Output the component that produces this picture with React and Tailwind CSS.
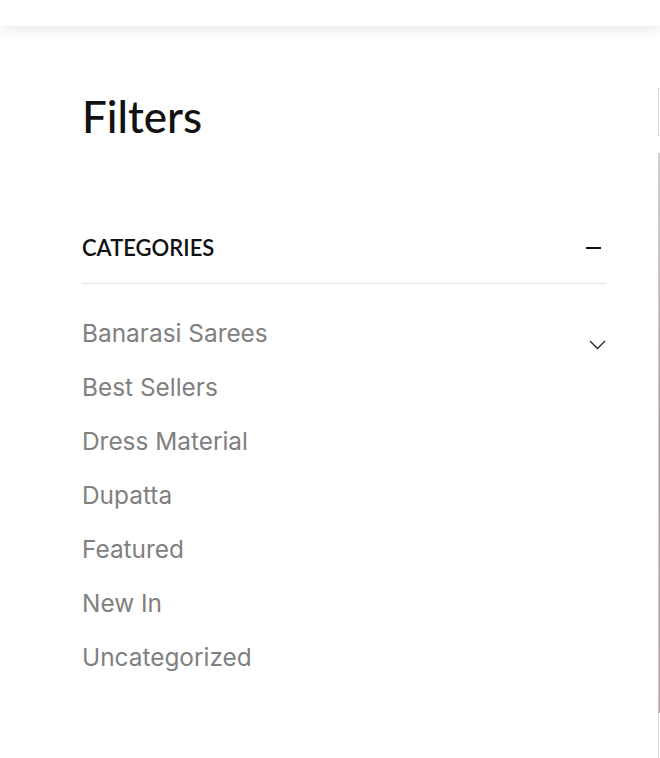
import React, { useState } from 'react';

const categories = [
  'Banarasi Sarees',
  'Best Sellers',
  'Dress Material',
  'Dupatta',
  'Featured',
  'New In',
  'Uncategorized',
];

export default function App() {
  const [open, setOpen] = useState(true);

  return (
    <div className="relative h-[758px] w-[660px] overflow-hidden bg-white">
      {/* top header strip */}
      <div className="relative z-10 h-[26px] w-full bg-white shadow-[0_4px_14px_rgba(0,0,0,0.09)]" />

      <div className="flex">
        {/* filters panel */}
        <div className="w-[658px] shrink-0 pl-[82px] pr-[52px]">
          <h2
            className="mt-[62px] text-[44px] font-medium leading-[56px] text-[#111]"
            style={{ fontFamily: 'Lato, sans-serif' }}
          >
            Filters
          </h2>

          <div className="mt-[89px]">
            <button
              onClick={() => setOpen(!open)}
              className="flex w-full items-center justify-between border-b border-[#e4e4e4] pb-[20px]"
            >
              <span
                className="text-[22px] font-semibold leading-[30px] text-[#111]"
                style={{ fontFamily: 'Lato, sans-serif' }}
              >
                CATEGORIES
              </span>
              <span className="mr-[5px] block h-[1.5px] w-[15px] bg-[#111]" />
            </button>

            {open && (
              <ul className="pt-[22px]" style={{ fontFamily: 'Inter, sans-serif' }}>
                {categories.map((c, i) => (
                  <li key={c} className="flex h-[54px] items-center justify-between">
                    <span className="text-[24.4px] leading-[30px] text-[#808080]">{c}</span>
                    {i === 0 && (
                      <svg
                        width="17"
                        height="10"
                        viewBox="0 0 17 10"
                        fill="none"
                        stroke="#222"
                        strokeWidth="1.3"
                        className="mt-[24px]"
                      >
                        <path d="M1 1l7.5 7.5L16 1" />
                      </svg>
                    )}
                  </li>
                ))}
              </ul>
            )}
          </div>
        </div>

        {/* page content peeking behind the drawer */}
        <div className="flex w-[300px] shrink-0 flex-col">
          <div className="mt-[62px] h-[48px] border border-[#ddd]" />
          <div className="mt-[17px] h-[560px] border-l border-[#ccc] bg-gradient-to-b from-[#d6d6d6] via-[#a89aa0] to-[#b7a4ab]" />
          <div className="h-[60px] border-l border-[#ddd]" />
        </div>
      </div>
    </div>
  );
}
